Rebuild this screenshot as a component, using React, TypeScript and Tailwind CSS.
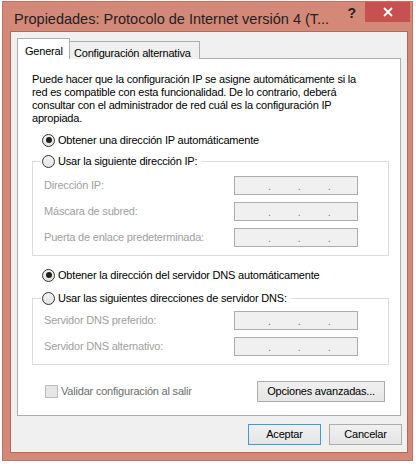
import React from "react";

const font = { fontFamily: '"Liberation Sans", Arial, sans-serif' };

function Radio({ checked }: { checked?: boolean }) {
    return (
        <span className="w-[13px] h-[13px] rounded-full border border-[#333333] bg-gradient-to-b from-[#f4f4f4] to-[#e2e2e2] flex items-center justify-center shrink-0">
            {checked && <span className="w-[6px] h-[6px] rounded-full bg-[#1f1f1f]" />}
        </span>
    );
}

function IpBox() {
    return (
        <div className="w-[124px] h-[19px] border border-[#adadad] bg-[#f0f0f0] flex items-end pb-[2px] pl-[33px] gap-[27px] text-[#7a7a7a] leading-none text-[11px]">
            <span>.</span>
            <span>.</span>
            <span>.</span>
        </div>
    );
}

function IpRow({ label }: { label: string }) {
    return (
        <div className="flex items-center h-[19px]">
            <span className="w-[201px] pl-[11px] text-[#a0a0a0]">{label}</span>
            <IpBox />
        </div>
    );
}

export default function App() {
    return (
        <div className="w-[416px] h-[464px] bg-white pt-[1px] pl-[2px]" style={font}>
            {/* window frame */}
            <div className="w-[411px] h-[460px] bg-[#d38878] border border-[#bb7466] flex flex-col">
                {/* title bar */}
                <div className="h-[29px] flex items-start">
                    <div className="pl-[11px] pt-[10px] text-[14.5px] text-[#222] leading-none flex-1 whitespace-nowrap">
                        Propiedades: Protocolo de Internet versión 4 (T...
                    </div>
                    <div className="pt-[4px] pr-[9px] text-[14px] font-bold text-[#222] leading-none">?</div>
                    <div className="w-[45px] h-[20px] bg-[#c75050] flex items-center justify-center mr-[2px]">
                        <svg width="10" height="10" viewBox="0 0 10 10">
                            <path d="M1 1 L9 9 M9 1 L1 9" stroke="white" strokeWidth="1.8" />
                        </svg>
                    </div>
                </div>

                {/* client area */}
                <div className="ml-[7px] mr-[4px] h-[422px] bg-[#f0f0f0] border border-[#b06a5d] flex flex-col text-[11px] tracking-[-0.2px] text-black">
                    <div className="pl-[6px] pt-[7px]">
                        {/* tabs */}
                        <div className="flex items-end h-[20px]">
                            <div className="h-[21px] w-[53px] bg-white border border-b-0 border-[#adadad] pl-[7px] pt-[4px] relative z-10">
                                General
                            </div>
                            <div className="h-[18px] w-[130px] bg-[#f0f0f0] border border-b-0 border-l-0 border-[#adadad] px-[4px] pt-[3px]">
                                Configuración alternativa
                            </div>
                        </div>

                        {/* panel */}
                        <div className="w-[384px] h-[358px] bg-white border border-[#adadad] -mt-[1px] pl-[14px] pr-[11px] pt-[14px] leading-[13px]">
                            <p>
                                Puede hacer que la configuración IP se asigne automáticamente si la
                                <br />
                                red es compatible con esta funcionalidad. De lo contrario, deberá
                                <br />
                                consultar con el administrador de red cuál es la configuración IP
                                <br />
                                apropiada.
                            </p>

                            <div className="flex items-center gap-[3px] pl-[10px] mt-[7px] h-[16px]">
                                <Radio checked />
                                <span>Obtener una dirección IP automáticamente</span>
                            </div>

                            <fieldset className="border border-[#dcdcdc] w-[357px] mt-[5px] pt-[7px] pb-[8px]">
                                <legend className="ml-[8px] px-[1px] flex items-center gap-[3px] pr-[4px] h-[16px]">
                                    <Radio />
                                    <span>Usar la siguiente dirección IP:</span>
                                </legend>
                                <div className="flex flex-col gap-[7px]">
                                    <IpRow label="Dirección IP:" />
                                    <IpRow label="Máscara de subred:" />
                                    <IpRow label="Puerta de enlace predeterminada:" />
                                </div>
                            </fieldset>

                            <div className="flex items-center gap-[3px] pl-[10px] mt-[11px] h-[16px]">
                                <Radio checked />
                                <span>Obtener la dirección del servidor DNS automáticamente</span>
                            </div>

                            <fieldset className="border border-[#dcdcdc] w-[357px] mt-[7px] pt-[5px] pb-[8px]">
                                <legend className="ml-[8px] px-[1px] flex items-center gap-[3px] pr-[4px] h-[16px]">
                                    <Radio />
                                    <span>Usar las siguientes direcciones de servidor DNS:</span>
                                </legend>
                                <div className="flex flex-col gap-[7px]">
                                    <IpRow label="Servidor DNS preferido:" />
                                    <IpRow label="Servidor DNS alternativo:" />
                                </div>
                            </fieldset>

                            <div className="flex items-center justify-between mt-[16px] pl-[13px] pr-[4px]">
                                <div className="flex items-center gap-[3px]">
                                    <span className="w-[13px] h-[13px] border border-[#bcbcbc] bg-[#e6e6e6]" />
                                    <span className="text-[#6d6d6d]">Validar configuración al salir</span>
                                </div>
                                <button className="w-[128px] h-[21px] border border-[#acacac] bg-gradient-to-b from-[#f0f0f0] to-[#e5e5e5]">
                                    Opciones avanzadas...
                                </button>
                            </div>
                        </div>
                    </div>

                    {/* dialog buttons */}
                    <div className="flex justify-end gap-[8px] pr-[5px] mt-[8px]">
                        <button className="w-[73px] h-[21px] border border-[#3c9be8] bg-gradient-to-b from-[#f0f0f0] to-[#e5e5e5]">
                            Aceptar
                        </button>
                        <button className="w-[73px] h-[21px] border border-[#acacac] bg-gradient-to-b from-[#f0f0f0] to-[#e5e5e5]">
                            Cancelar
                        </button>
                    </div>
                </div>
            </div>
        </div>
    );
}
